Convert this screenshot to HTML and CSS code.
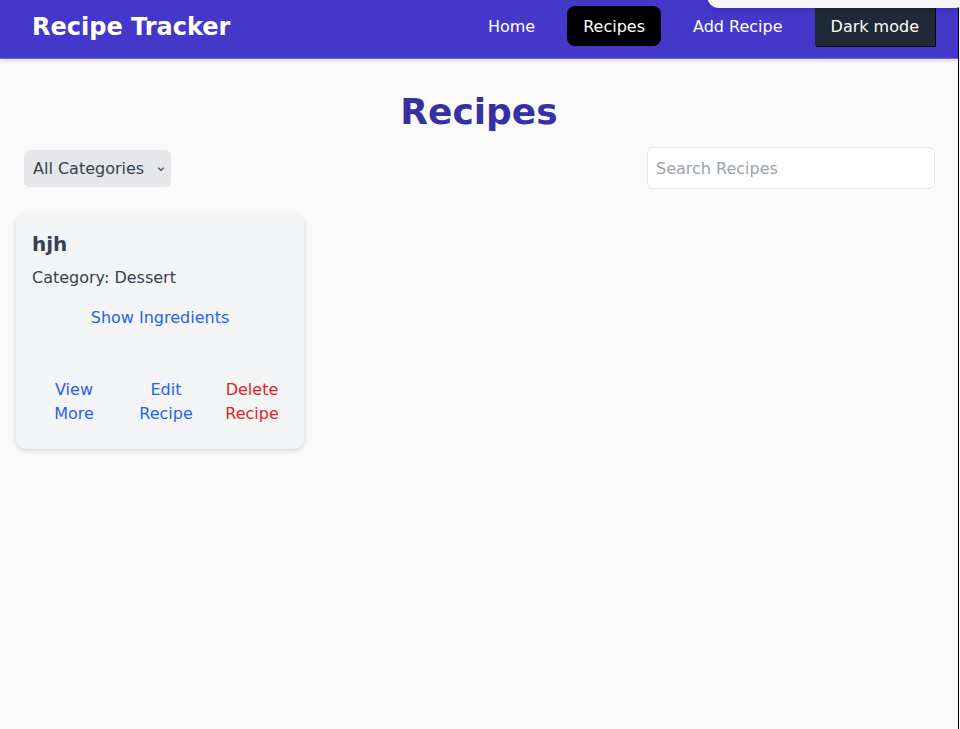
FILE: index.html
```html
<!DOCTYPE html>
<html lang="en">
<head>
<meta charset="utf-8">
<title>Recipe Tracker</title>
<link rel="stylesheet" href="styles.css">
</head>
<body>
<div class="page">
  <header class="topbar">
    <div class="brand">Recipe Tracker</div>
    <nav class="nav">
      <a class="nav-link">Home</a>
      <a class="nav-link active">Recipes</a>
      <a class="nav-link">Add Recipe</a>
      <button class="nav-link dark-toggle">Dark mode</button>
    </nav>
  </header>
  <main class="main">
    <h1 class="page-title">Recipes</h1>
    <div class="filters">
      <div class="select">All Categories <svg class="chev" width="10" height="10" viewBox="0 0 10 10"><path d="M2.2 3.6 L5 6.4 L7.8 3.6" fill="none" stroke="#374151" stroke-width="1.2"/></svg></div>
      <div class="search">Search Recipes</div>
    </div>
    <div class="cards">
      <div class="card">
        <h2 class="card-title">hjh</h2>
        <p class="card-cat">Category: Dessert</p>
        <div class="ingr"><span class="link">Show Ingredients</span></div>
        <div class="actions">
          <span class="link act">View More</span>
          <span class="link act">Edit Recipe</span>
          <span class="link act danger">Delete Recipe</span>
        </div>
      </div>
    </div>
  </main>
  <div class="toast"></div>
</div>
</body>
</html>
```
FILE: styles.css
```css
* { box-sizing: border-box; }
html, body { margin: 0; padding: 0; height: 100%; }
body {
  font-family: "DejaVu Sans", sans-serif;
  background: #ffffff;
}
.page {
  position: relative;
  width: 959px;
  min-height: 729px;
  background: #fafafa;
  border-right: 1px solid #000;
}
.topbar {
  height: 59px;
  background: #4338ca;
  border-bottom: 1px solid #6366f1;
  box-shadow: 0 2px 4px rgba(0,0,0,0.12);
  display: flex;
  align-items: flex-start;
  justify-content: space-between;
  padding: 6px 23px 0 32px;
}
.brand {
  color: #fff;
  font-weight: bold;
  font-size: 24px;
  line-height: 40px;
  padding-top: 1px;
}
.nav { display: flex; gap: 16px; }
.nav-link {
  color: #fff;
  font-size: 16px;
  line-height: 24px;
  padding: 9px 16px 7px;
  border-radius: 8px;
  font-family: inherit;
}
.nav-link.active { background: #000; }
.dark-toggle {
  background: #1f2937;
  border: none;
  border-radius: 0;
  box-shadow: 1px 1px 0 #000;
}
.toast {
  position: absolute;
  top: -20px;
  left: 707px;
  width: 260px;
  height: 28px;
  background: #f6f5fb;
  border-radius: 12px;
  box-shadow: 0 2px 6px rgba(0,0,0,0.15);
}
.main { padding: 33px 16px; }
.page-title {
  margin: 0 0 15px;
  text-align: center;
  color: #3730a3;
  font-size: 36px;
  line-height: 40px;
  font-weight: bold;
}
.filters {
  display: flex;
  justify-content: space-between;
  align-items: center;
  padding: 0 7px 0 8px;
  margin-bottom: 24px;
}
.select {
  height: 37px;
  width: 147px;
  background: #e5e7eb;
  border-radius: 6px;
  color: #374151;
  font-size: 16px;
  display: flex;
  align-items: center;
  justify-content: space-between;
  padding: 1px 5px 0 9px;
}
.chev { margin-top: 1px; }
.search {
  width: 288px;
  height: 42px;
  background: #fff;
  border: 1px solid #e5e7eb;
  border-radius: 6px;
  color: #9ca3af;
  font-size: 16px;
  display: flex;
  align-items: center;
  padding: 1px 8px 0;
}
.cards { display: flex; }
.card {
  width: 288px;
  background: #f3f4f6;
  border-radius: 10px;
  box-shadow: 0 2px 5px rgba(0,0,0,0.15);
  padding: 17px 16px 15px;
}
.card-title {
  margin: 0 0 8px;
  font-size: 20px;
  line-height: 28px;
  font-weight: bold;
  color: #374151;
}
.card-cat {
  margin: 0 0 8px;
  font-size: 16px;
  line-height: 24px;
  color: #374151;
}
.link { color: #2563eb; font-size: 16px; line-height: 24px; }
.ingr { text-align: center; padding: 8px 0; }
.actions {
  margin-top: 32px;
  display: grid;
  grid-template-columns: 84px 100px 72px;
}
.act { padding: 8px; text-align: center; }
.danger { color: #dc2626; }
```
